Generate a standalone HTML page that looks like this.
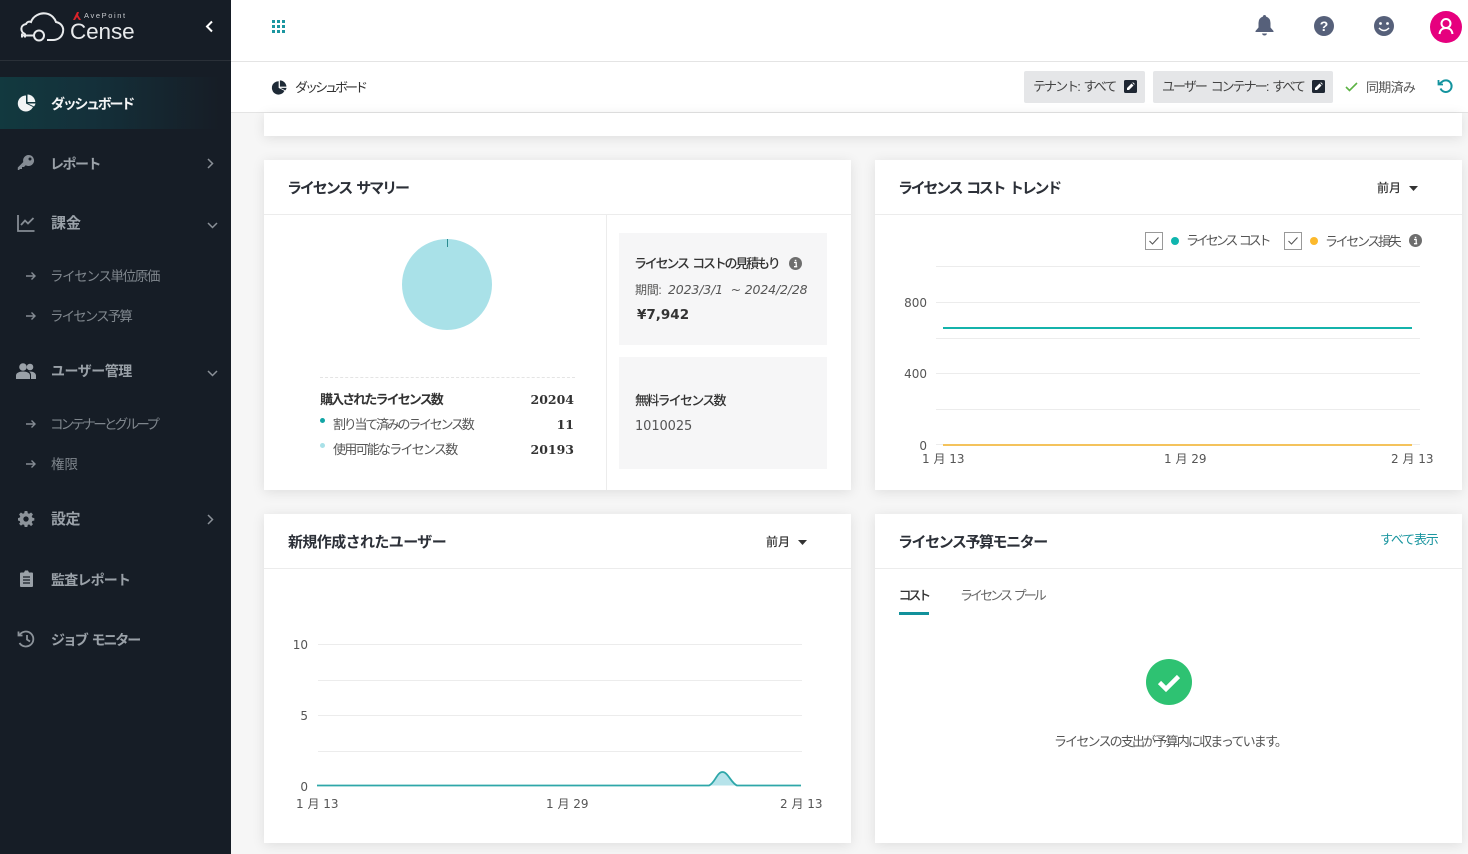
<!DOCTYPE html>
<html lang="ja"><head><meta charset="utf-8"><title>ダッシュボード</title>
<style>
html,body{margin:0;padding:0}
body{width:1468px;height:854px;overflow:hidden;position:relative;background:#f6f6f6;font-family:"DejaVu Sans","Noto Sans CJK JP",sans-serif;color:#32363e}
.t{position:absolute;line-height:20px;height:20px;margin-top:1px;white-space:nowrap;font-family:"Liberation Sans","Noto Sans CJK JP",sans-serif;font-size:13px}
.n{margin-top:0}
.w{word-spacing:3px}
.d{font-family:"DejaVu Sans","Noto Sans CJK JP",sans-serif}
.b{position:absolute}
.card{position:absolute;background:#fff;box-shadow:0 2px 12px rgba(0,0,0,.1)}
.hl{position:absolute;height:1px;background:#ececec}
.side{font-size:14px;font-weight:700;color:#9aa1a8;letter-spacing:-1px}
.sub{font-size:13.5px;color:#7f868d;letter-spacing:-1.1px}
.h{font-size:15px;font-weight:700;color:#2c3038;letter-spacing:-.7px}
.ax{font-family:"DejaVu Sans","Noto Sans CJK JP",sans-serif;font-size:12px;color:#555}
.num{font-family:"DejaVu Serif",serif;font-weight:700;font-size:12.5px;color:#333;text-align:right}
svg{position:absolute;overflow:visible}
</style></head><body>

<!-- sidebar -->
<div class="b" style="left:0;top:0;width:231px;height:854px;background:#161d26"></div>
<div class="b" style="left:0;top:60px;width:231px;height:1px;background:#2a3038"></div>
<div class="b" style="left:0;top:77px;width:231px;height:52px;background:linear-gradient(90deg,#12393f 0%,#14303a 40%,#161d26 95%)"></div>

<svg style="left:20px;top:11px" width="46" height="34" viewBox="0 0 46 34" fill="none" stroke="#e8eaec" stroke-width="2">
<path d="M5 23C0 21 0 14 6 13C7 11 9 10 11 11C13 5 20 1.500 26 2.500C32 3.500 35 8 36 11C41 12 44 16 43 21C42 26 38 29 33 29H27"/>
<circle cx="19" cy="24.500" r="5"/><path d="M14 24.500H2M2 22.500v4M5 22.500v4"/>
</svg>
<svg style="left:73px;top:12px" width="8" height="8" viewBox="0 0 8 8"><path d="M0 8L4 0H6L5 3L8 8H6L4 5L2 8Z" fill="#d8232a"/></svg>
<div class="t n" style="left:84px;top:6px;font-size:7.5px;color:#c9ccd0;letter-spacing:1.6px">AvePoint</div>
<div class="t n" style="left:70px;top:22px;font-size:22.5px;color:#e8eaec;font-weight:400;letter-spacing:-.1px">Cense</div>
<svg style="left:205px;top:20px" width="9" height="13" viewBox="0 0 9 13" fill="none" stroke="#fff" stroke-width="2"><path d="M7 1.500L2 6.500L7 11.500"/></svg>

<!-- nav icons -->
<svg style="left:18px;top:94px" width="18" height="18" viewBox="0 0 18 18" fill="#f2f4f5"><path d="M8 1.500A8 8 0 1 0 15 13L8 9.500Z"/><path d="M9.500 .5A8 8 0 0 1 17.300 8H9.500Z"/><path d="M10 9.500H17.500Q17.300 11 16 12.500Z"/></svg>
<div class="t side" style="left:51px;top:92.500px;color:#f4f5f6;letter-spacing:-2.300px">ダッシュボード</div>

<svg style="left:17px;top:154px" width="18" height="18" viewBox="0 0 18 18" fill="#858c94"><path d="M11.500 1A5.500 5.500 0 1 1 8.700 11.200L7 13H5V15H3L2 16H.8V13.500L6.300 8A5.500 5.500 0 0 1 11.500 1Z"/><circle cx="13" cy="5" r="1.500" fill="#161d26"/></svg>
<div class="t side" style="left:50px;top:153px;letter-spacing:-1.500px">レポート</div>
<svg style="left:207px;top:158px" width="7" height="11" viewBox="0 0 7 11" fill="none" stroke="#8a9097" stroke-width="1.500"><path d="M1 1L5.500 5.500L1 10"/></svg>

<svg style="left:17px;top:215px" width="18" height="17" viewBox="0 0 18 17" fill="none" stroke="#858c94" stroke-width="1.800"><path d="M1 0V16H17.500"/><path d="M4 10L8 5.500L11 8.500L16.500 3"/></svg>
<div class="t side" style="left:51px;top:213px;font-size:15px;letter-spacing:0">課金</div>
<svg style="left:207px;top:222px" width="11" height="7" viewBox="0 0 11 7" fill="none" stroke="#8a9097" stroke-width="1.500"><path d="M1 1L5.500 5.500L10 1"/></svg>

<svg style="left:26px;top:271px" width="10" height="10" viewBox="0 0 10 10" fill="none" stroke="#858c94" stroke-width="1.400"><path d="M0 5H9M5.500 1.500L9 5L5.500 8.500"/></svg>
<div class="t sub" style="left:50px;top:266px;letter-spacing:-1.350px">ライセンス単位原価</div>
<svg style="left:26px;top:311px" width="10" height="10" viewBox="0 0 10 10" fill="none" stroke="#858c94" stroke-width="1.400"><path d="M0 5H9M5.500 1.500L9 5L5.500 8.500"/></svg>
<div class="t sub" style="left:50px;top:306px;letter-spacing:-1.900px">ライセンス予算</div>

<svg style="left:16px;top:363px" width="20" height="16" viewBox="0 0 20 16" fill="#9aa1a8"><circle cx="7" cy="4" r="3.800"/><circle cx="14" cy="4" r="3.300"/><path d="M0 16V12.500C0 10 3 8.500 7 8.500S14 10 14 12.500V16Z"/><path d="M15 16V12C15 10.500 14.500 9.500 13 8.500C17 8.200 20 10 20 12.500V16Z"/></svg>
<div class="t side" style="left:51px;top:360px;letter-spacing:-.5px">ユーザー管理</div>
<svg style="left:207px;top:370px" width="11" height="7" viewBox="0 0 11 7" fill="none" stroke="#8a9097" stroke-width="1.500"><path d="M1 1L5.500 5.500L10 1"/></svg>

<svg style="left:26px;top:419px" width="10" height="10" viewBox="0 0 10 10" fill="none" stroke="#858c94" stroke-width="1.400"><path d="M0 5H9M5.500 1.500L9 5L5.500 8.500"/></svg>
<div class="t sub" style="left:50px;top:414px;letter-spacing:-2.700px">コンテナーとグループ</div>
<svg style="left:26px;top:459px" width="10" height="10" viewBox="0 0 10 10" fill="none" stroke="#858c94" stroke-width="1.400"><path d="M0 5H9M5.500 1.500L9 5L5.500 8.500"/></svg>
<div class="t sub" style="left:51px;top:454px;letter-spacing:0">権限</div>

<svg style="left:18px;top:511px" width="16" height="16" viewBox="0 0 24 24" fill="#8c939a"><path fill-rule="evenodd" d="M10 0h4l.7 3.300 2 .9L19.600 2.300 22.400 5.100 20.600 8l.9 2 3 .7v3.600l-3 .7-.9 2 1.800 2.900-2.800 2.800L16.700 20l-2 .9L14 24h-4l-.7-3.100-2-.9-2.900 1.900-2.800-2.800L3.400 17l-.9-2-2.500-.7v-3.600L2.500 10l.9-2L1.600 5.100 4.400 2.300 7.300 4.200l2-.9ZM12 8a4 4 0 1 0 0 8 4 4 0 0 0 0-8Z"/></svg>
<div class="t side" style="left:51px;top:509px;font-size:15px;letter-spacing:-.5px">設定</div>
<svg style="left:207px;top:514px" width="7" height="11" viewBox="0 0 7 11" fill="none" stroke="#8a9097" stroke-width="1.500"><path d="M1 1L5.500 5.500L1 10"/></svg>

<svg style="left:20px;top:570px" width="13" height="17" viewBox="0 0 13 17"><path d="M1 2.500H4L5 .5H8L9 2.500H12Q13 2.500 13 3.500V16Q13 17 12 17H1Q0 17 0 16V3.500Q0 2.500 1 2.500Z" fill="#9aa1a8"/><path d="M3 7H10M3 10H10M3 13H10" stroke="#161d26" stroke-width="1.300"/></svg>
<div class="t side" style="left:51px;top:569px;letter-spacing:-.8px">監査レポート</div>

<svg style="left:17px;top:630px" width="18" height="18" viewBox="0 0 18 18" fill="none" stroke="#8c939a" stroke-width="1.800"><path d="M2.500 5A7.500 7.500 0 1 1 2.500 13"/><path d="M1.500 1.500V5.500H5.500"/><path d="M10 5V9.500L13 11.500"/></svg>
<div class="t side w" style="left:51px;top:628.500px;letter-spacing:-2.100px">ジョブ モニター</div>

<!-- top header -->
<div class="b" style="left:231px;top:0;width:1237px;height:61px;background:#fff"></div>
<div class="b" style="left:231px;top:61px;width:1237px;height:1px;background:#e4e4e4"></div>
<div class="b" style="left:231px;top:62px;width:1237px;height:50px;background:#fff"></div>
<div class="b" style="left:231px;top:112px;width:1237px;height:1px;background:#e4e4e4"></div>

<svg style="left:272px;top:20px" width="13" height="13" viewBox="0 0 13 13" fill="#1b96a0">
<rect x="0" y="0" width="3" height="3"/><rect x="5" y="0" width="3" height="3"/><rect x="10" y="0" width="3" height="3"/>
<rect x="0" y="5" width="3" height="3"/><rect x="5" y="5" width="3" height="3"/><rect x="10" y="5" width="3" height="3"/>
<rect x="0" y="10" width="3" height="3"/><rect x="5" y="10" width="3" height="3"/><rect x="10" y="10" width="3" height="3"/>
</svg>

<svg style="left:1255px;top:15px" width="19" height="21" viewBox="0 0 19 21" fill="#56607a"><path d="M9.500 0Q11 0 11 1.500Q15.500 3 15.500 8V12.500L18.500 16V17H.5V16L3.500 12.500V8Q3.500 3 8 1.500Q8 0 9.500 0Z"/><path d="M7 18.500H12Q11.500 20.500 9.500 20.500T7 18.500Z"/></svg>
<div class="b" style="left:1314px;top:16px;width:20px;height:20px;border-radius:50%;background:#56607a"></div>
<div class="t n" style="left:1314px;top:16px;width:20px;text-align:center;color:#fff;font-weight:700;font-size:14px">?</div>
<svg style="left:1374px;top:16px" width="20" height="20" viewBox="0 0 20 20"><circle cx="10" cy="10" r="10" fill="#56607a"/><circle cx="6.500" cy="7.500" r="1.400" fill="#fff"/><circle cx="13.500" cy="7.500" r="1.400" fill="#fff"/><path d="M5 12Q10 17 15 12" fill="none" stroke="#fff" stroke-width="1.500"/></svg>
<svg style="left:1430px;top:11px" width="32" height="32" viewBox="0 0 32 32"><circle cx="16" cy="16" r="16" fill="#e6007e"/><circle cx="16" cy="12.500" r="4.500" fill="none" stroke="#fff" stroke-width="2"/><path d="M9.500 23C10 18.500 13 17 16 17S22 18.500 22.500 23" fill="none" stroke="#fff" stroke-width="2"/></svg>

<!-- breadcrumb -->
<svg style="left:272px;top:80px" width="15" height="15" viewBox="0 0 18 18" fill="#1e2a36"><path d="M8 1.500A8 8 0 1 0 15 13L8 9.500Z"/><path d="M9.500 .5A8 8 0 0 1 17.300 8H9.500Z"/><path d="M10 9.500H17.500Q17.300 11 16 12.500Z"/></svg>
<div class="t n" style="left:295px;top:78px;font-size:13px;letter-spacing:-3px;color:#333">ダッシュボード</div>

<div class="b" style="left:1024px;top:71px;width:121px;height:32px;background:#e5e6e8;border-radius:2px"></div>
<div class="t n w" style="left:1033px;top:77px;letter-spacing:-1.950px;font-size:13px;color:#444">テナント: すべて</div>
<svg style="left:1124px;top:80px" width="13" height="13" viewBox="0 0 13 13"><rect width="13" height="13" rx="1.500" fill="#1f2733"/><path d="M3 10V8L7.500 3.500L9.500 5.500L5 10Z M8.300 2.800L9 2.200L10.800 4L10.200 4.800Z" fill="#fff"/></svg>
<div class="b" style="left:1153px;top:71px;width:180px;height:32px;background:#e5e6e8;border-radius:2px"></div>
<div class="t n w" style="left:1162px;top:77px;letter-spacing:-1.950px;font-size:13px;color:#444">ユーザー コンテナー: すべて</div>
<svg style="left:1312px;top:80px" width="13" height="13" viewBox="0 0 13 13"><rect width="13" height="13" rx="1.500" fill="#1f2733"/><path d="M3 10V8L7.500 3.500L9.500 5.500L5 10Z M8.300 2.800L9 2.200L10.800 4L10.200 4.800Z" fill="#fff"/></svg>
<svg style="left:1345px;top:82px" width="13" height="10" viewBox="0 0 13 10" fill="none" stroke="#5cb244" stroke-width="1.600"><path d="M1 5L4.500 8.500L12 1"/></svg>
<div class="t" style="left:1366px;top:77px;font-size:13px;letter-spacing:-.7px;color:#555">同期済み</div>
<svg style="left:1437px;top:79px" width="16" height="16" viewBox="0 0 16 16" fill="none" stroke="#13939e" stroke-width="2"><path d="M3.500 9.500A5.800 5.800 0 1 0 5 2.800L2 5"/><path d="M1.500 1V5.500H6" stroke-width="1.800"/></svg>

<!-- top sliver card -->
<div class="card" style="left:264px;top:113px;width:1198px;height:23px"></div>

<!-- License summary -->
<div class="card" style="left:264px;top:160px;width:587px;height:330px"></div>
<div class="hl" style="left:264px;top:214px;width:587px"></div>
<div class="t h w" style="left:287px;top:178px;letter-spacing:-2.100px">ライセンス サマリー</div>
<div class="b" style="left:606px;top:215px;width:1px;height:275px;background:#ececec"></div>
<div class="b" style="left:402px;top:239px;width:90px;height:91px;border-radius:50%;background:#a9e1e8"></div>
<div class="b" style="left:447px;top:239px;width:1px;height:8px;background:#2b8b90"></div>
<div class="b" style="left:320px;top:377px;width:255px;border-top:1px dashed #e4e4e4"></div>
<div class="t" style="left:320px;top:389px;font-weight:700;letter-spacing:-1.900px;color:#333">購入されたライセンス数</div>
<div class="t num" style="left:474px;width:100px;top:389px">20204</div>
<div class="b" style="left:320px;top:418px;width:5px;height:5px;border-radius:50%;background:#12a5a5"></div>
<div class="t" style="left:333px;top:414px;letter-spacing:-2.250px;color:#555">割り当て済みのライセンス数</div>
<div class="t num" style="left:474px;width:100px;top:414px">11</div>
<div class="b" style="left:320px;top:443px;width:5px;height:5px;border-radius:50%;background:#a9e1e8"></div>
<div class="t" style="left:333px;top:439px;letter-spacing:-1.750px;color:#555">使用可能なライセンス数</div>
<div class="t num" style="left:474px;width:100px;top:439px">20193</div>

<div class="b" style="left:619px;top:233px;width:208px;height:112px;background:#f6f6f7"></div>
<div class="t w" style="left:634px;top:253px;font-weight:500;letter-spacing:-2.200px;color:#333">ライセンス コストの見積もり</div>
<svg style="left:789px;top:257px" width="13" height="13" viewBox="0 0 13 13"><circle cx="6.500" cy="6.500" r="6.500" fill="#6e6e6e"/><path d="M5 5.500H7.200V9.500H8.200M5 9.700H8.200" stroke="#fff" stroke-width="1.300" fill="none"/><rect x="5.800" y="2.800" width="1.500" height="1.500" fill="#fff"/></svg>
<div class="t" style="left:635px;top:279px;font-size:12px;color:#555;letter-spacing:-.3px">期間:</div>
<div class="t d" style="left:668px;top:279px;font-size:12.500px;font-style:italic;color:#555;letter-spacing:-.15px">2023/3/1 &nbsp;~ 2024/2/28</div>
<div class="t d" style="left:637px;top:304px;font-size:13.5px;font-weight:700;color:#333">¥7,942</div>

<div class="b" style="left:619px;top:357px;width:208px;height:112px;background:#f6f6f7"></div>
<div class="t" style="left:635px;top:390px;font-weight:500;letter-spacing:-1.750px;color:#333">無料ライセンス数</div>
<div class="t d" style="left:635px;top:416px;font-size:13px;color:#555;letter-spacing:-.1px">1010025</div>

<!-- License cost trend -->
<div class="card" style="left:875px;top:160px;width:587px;height:330px"></div>
<div class="hl" style="left:875px;top:214px;width:587px"></div>
<div class="t h w" style="left:898px;top:178px;letter-spacing:-2.300px">ライセンス コスト トレンド</div>
<div class="t n" style="left:1377px;top:178px;font-size:12px;font-weight:500;color:#333">前月</div>
<svg style="left:1409px;top:186px" width="9" height="5" viewBox="0 0 9 5"><path d="M0 0H9L4.500 5Z" fill="#333"/></svg>

<svg style="left:1145px;top:232px" width="18" height="18" viewBox="0 0 18 18" fill="none"><rect x=".5" y=".5" width="17" height="17" stroke="#999" fill="#fff"/><path d="M4.500 9L7.500 12L13.500 5.500" stroke="#555" stroke-width="1.100"/></svg>
<div class="b" style="left:1171px;top:237px;width:8px;height:8px;border-radius:50%;background:#0fb5ae"></div>
<div class="t w" style="left:1186px;top:230px;letter-spacing:-3.100px;color:#555">ライセンス コスト</div>
<svg style="left:1284px;top:232px" width="18" height="18" viewBox="0 0 18 18" fill="none"><rect x=".5" y=".5" width="17" height="17" stroke="#999" fill="#fff"/><path d="M4.500 9L7.500 12L13.500 5.500" stroke="#555" stroke-width="1.100"/></svg>
<div class="b" style="left:1310px;top:237px;width:8px;height:8px;border-radius:50%;background:#fcb92c"></div>
<div class="t" style="left:1325px;top:231px;letter-spacing:-2.350px;color:#555">ライセンス損失</div>
<svg style="left:1409px;top:234px" width="13" height="13" viewBox="0 0 13 13"><circle cx="6.500" cy="6.500" r="6.500" fill="#6e6e6e"/><path d="M5 5.500H7.200V9.500H8.200M5 9.700H8.200" stroke="#fff" stroke-width="1.300" fill="none"/><rect x="5.800" y="2.800" width="1.500" height="1.500" fill="#fff"/></svg>

<div class="hl" style="left:936px;top:266px;width:484px"></div>
<div class="hl" style="left:936px;top:302px;width:484px"></div>
<div class="hl" style="left:936px;top:338px;width:484px"></div>
<div class="hl" style="left:936px;top:373px;width:484px"></div>
<div class="hl" style="left:936px;top:409px;width:484px"></div>
<div class="hl" style="left:936px;top:444px;width:484px"></div>
<div class="b" style="left:943px;top:327px;width:469px;height:2px;background:#14b3ab"></div>
<div class="b" style="left:943px;top:444px;width:469px;height:2px;background:#f4c35c"></div>
<div class="t ax" style="left:877px;width:50px;text-align:right;top:292px">800</div>
<div class="t ax" style="left:877px;width:50px;text-align:right;top:363px">400</div>
<div class="t ax" style="left:877px;width:50px;text-align:right;top:435px">0</div>
<div class="t ax" style="left:922px;top:448px">1 月 13</div>
<div class="t ax" style="left:1164px;top:448px">1 月 29</div>
<div class="t ax" style="left:1391px;top:448px">2 月 13</div>

<!-- New users -->
<div class="card" style="left:264px;top:514px;width:587px;height:329px"></div>
<div class="hl" style="left:264px;top:568px;width:587px"></div>
<div class="t h" style="left:288px;top:532px;letter-spacing:-.6px">新規作成されたユーザー</div>
<div class="t n" style="left:766px;top:532px;font-size:12px;font-weight:500;color:#333">前月</div>
<svg style="left:798px;top:540px" width="9" height="5" viewBox="0 0 9 5"><path d="M0 0H9L4.500 5Z" fill="#333"/></svg>
<div class="hl" style="left:318px;top:644px;width:484px"></div>
<div class="hl" style="left:318px;top:680px;width:484px"></div>
<div class="hl" style="left:318px;top:715px;width:484px"></div>
<div class="hl" style="left:318px;top:751px;width:484px"></div>
<svg style="left:0;top:0" width="1468" height="854" fill="none"><path d="M709 785.500C715 783 717 772 722.500 772S731 783 737 785.500Z" fill="#b6e3ea"/><path d="M317 785.500H709C715 783 717 772 722.500 772S731 783 737 785.500H801" stroke="#2ea7a9" stroke-width="1.800"/></svg>
<div class="t ax" style="left:258px;width:50px;text-align:right;top:634px">10</div>
<div class="t ax" style="left:258px;width:50px;text-align:right;top:705px">5</div>
<div class="t ax" style="left:258px;width:50px;text-align:right;top:776px">0</div>
<div class="t ax" style="left:296px;top:793px">1 月 13</div>
<div class="t ax" style="left:546px;top:793px">1 月 29</div>
<div class="t ax" style="left:780px;top:793px">2 月 13</div>

<!-- Budget monitor -->
<div class="card" style="left:875px;top:514px;width:587px;height:329px"></div>
<div class="hl" style="left:875px;top:568px;width:587px"></div>
<div class="t h" style="left:898px;top:532px;letter-spacing:-1.450px">ライセンス予算モニター</div>
<div class="t" style="left:1380px;top:529px;letter-spacing:-1.200px;color:#1b96a0">すべて表示</div>
<div class="t" style="left:898.500px;top:585px;font-weight:500;letter-spacing:-3.100px;color:#333">コスト</div>
<div class="b" style="left:899px;top:612px;width:30px;height:3px;background:#12919b"></div>
<div class="t w" style="left:960px;top:585px;letter-spacing:-2.950px;color:#666">ライセンス プール</div>
<svg style="left:1146px;top:659px" width="46" height="46" viewBox="0 0 46 46"><circle cx="23" cy="23" r="23" fill="#2ec272"/><path d="M13.500 23.500L20 30L32.500 17.500" fill="none" stroke="#fff" stroke-width="4.500"/></svg>
<div class="t" style="left:1054px;top:731px;letter-spacing:-1.820px;color:#555">ライセンスの支出が予算内に収まっています。</div>

</body></html>
